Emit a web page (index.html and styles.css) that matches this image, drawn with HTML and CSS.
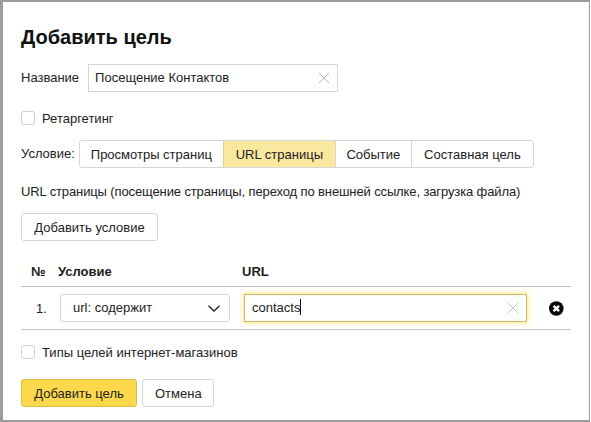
FILE: index.html
```html
<!DOCTYPE html>
<html>
<head>
  <meta charset="UTF-8">
  <title>Добавить цель</title>
  <link rel="stylesheet" href="styles.css">
</head>
<body>
  <div class="dialog">
    <h1 class="title">Добавить цель</h1>

    <div class="name_row">
      <span class="label">Название</span>
      <div class="input name_input">
        <span class="input_text">Посещение Контактов</span>
        <svg class="clear" width="12" height="12" viewBox="0 0 12 12"><path d="M1 1L11 11M11 1L1 11" stroke="#b5b5b5" stroke-width="1" fill="none"/></svg>
      </div>
    </div>

    <label class="check retarget">
      <span class="box"></span>
      <span>Ретаргетинг</span>
    </label>

    <div class="cond_row">
      <span class="label">Условие:</span>
      <div class="tabs">
        <div class="tab t1">Просмотры страниц</div>
        <div class="tab t2 active">URL страницы</div>
        <div class="tab t3">Событие</div>
        <div class="tab t4">Составная цель</div>
      </div>
    </div>

    <p class="hint">URL страницы (посещение страницы, переход по внешней ссылке, загрузка файла)</p>

    <button class="btn add_cond">Добавить условие</button>

    <div class="table">
      <div class="thead">
        <div class="th c_num">№</div>
        <div class="th c_cond">Условие</div>
        <div class="th c_url">URL</div>
      </div>
      <div class="trow">
        <div class="c_num num">1.</div>
        <div class="c_cond">
          <div class="select">
            <span class="input_text">url: содержит</span>
            <svg width="12" height="7" viewBox="0 0 12 7"><path d="M0.5 0.8L6 6L11.5 0.8" stroke="#222" stroke-width="1.3" fill="none"/></svg>
          </div>
        </div>
        <div class="c_url">
          <div class="input url_input">
            <span class="input_text">contacts<i class="caret"></i></span>
            <svg class="clear" width="12" height="12" viewBox="0 0 12 12"><path d="M1 1L11 11M11 1L1 11" stroke="#c4c4c4" stroke-width="1" fill="none"/></svg>
          </div>
        </div>
        <svg class="remove" width="15" height="15" viewBox="0 0 15 15"><circle cx="7.3" cy="7.5" r="7.3" fill="#0a0a0a"/><path d="M4.6 4.8L10 10.2M10 4.8L4.6 10.2" stroke="#fff" stroke-width="2.4" fill="none"/></svg>
      </div>
    </div>

    <label class="check shops">
      <span class="box"></span>
      <span>Типы целей интернет-магазинов</span>
    </label>

    <div class="actions">
      <button class="btn primary">Добавить цель</button>
      <button class="btn cancel">Отмена</button>
    </div>
  </div>
</body>
</html>
```

FILE: styles.css
```css
*{
  margin:0;
  padding:0;
  box-sizing:border-box;
}
body{
  width:591px;
  height:422px;
  overflow:hidden;
  background:#fff;
  font-family:"Liberation Sans",Arial,sans-serif;
  font-size:13px;
  color:#222;
}
.dialog{
  width:590px;
  height:422px;
  border:solid #9c9c9c;
  border-width:2px 1px 2px 3px;
  padding:22px 18px 0 18px;
  background:#fff;
}
.title{
  font-size:20px;
  line-height:26px;
  font-weight:bold;
  color:#111;
}
.label{
  line-height:28px;
}
.name_row{
  display:flex;
  align-items:center;
  gap:9px;
  margin-top:14px;
}
.input{
  height:28px;
  display:flex;
  align-items:center;
  justify-content:space-between;
  padding:0 7px 0 6px;
  border:1px solid #d6d6d6;
  background:#fff;
}
.name_input{
  width:250px;
}
.input_text{
  display:flex;
  align-items:center;
  padding-bottom:2px;
}
.clear{
  flex:none;
}
.check{
  display:flex;
  align-items:center;
  gap:7px;
  height:14px;
}
.box{
  width:14px;
  height:14px;
  border:1px solid #cfcfcf;
  border-radius:3px;
  background:#fff;
}
.retarget{
  margin-top:19px;
}
.cond_row{
  display:flex;
  align-items:center;
  gap:4px;
  margin-top:15px;
}
.tabs{
  display:flex;
  height:28px;
  border:1px solid #d6d6d6;
  border-radius:3px;
}
.tab{
  display:flex;
  align-items:center;
  justify-content:center;
  border-left:1px solid #d6d6d6;
}
.t1{
  width:143px;
  border-left:none;
}
.t2{
  width:112px;
}
.t3{
  width:76px;
}
.t4{
  width:122px;
}
.active{
  background:#fbe89f;
  border-color:#e3d189;
}
.hint{
  margin-top:16px;
  line-height:15px;
  letter-spacing:-0.12px;
}
.btn{
  height:28px;
  padding:0 12px;
  font-family:inherit;
  font-size:13px;
  color:#222;
  background:#fff;
  border:1px solid #d6d6d6;
  border-radius:3px;
}
.add_cond{
  display:block;
  width:137px;
  margin-top:14px;
}
.table{
  width:550px;
  margin-top:16px;
}
.thead{
  display:flex;
  height:30px;
  align-items:center;
  border-bottom:1px solid #bdbdbd;
}
.th{
  font-weight:bold;
  color:#222;
}
.th.c_num{
  width:37px;
  padding-left:10px;
}
.c_num{
  width:39px;
}
.c_cond{
  width:184px;
}
.trow{
  display:flex;
  align-items:center;
  height:43px;
  border-bottom:1px solid #c6c6c6;
}
.num{
  padding-left:15px;
  color:#223;
}
.select{
  width:170px;
  height:28px;
  display:flex;
  align-items:center;
  justify-content:space-between;
  padding:0 9px 0 12px;
  border:1px solid #d6d6d6;
  border-radius:3px;
}
.url_input{
  width:283px;
  padding-left:7px;
  border-color:#cdb95f;
  box-shadow:0 0 5px 1px #fce88f;
}
.caret{
  width:1px;
  height:16px;
  background:#111;
}
.remove{
  margin-left:22px;
}
.shops{
  margin-top:15px;
}
.actions{
  display:flex;
  gap:5px;
  margin-top:20px;
}
.primary{
  width:116px;
  background:#fcd84c;
  border-color:#dfbc45;
}
.cancel{
  width:72px;
}
```
